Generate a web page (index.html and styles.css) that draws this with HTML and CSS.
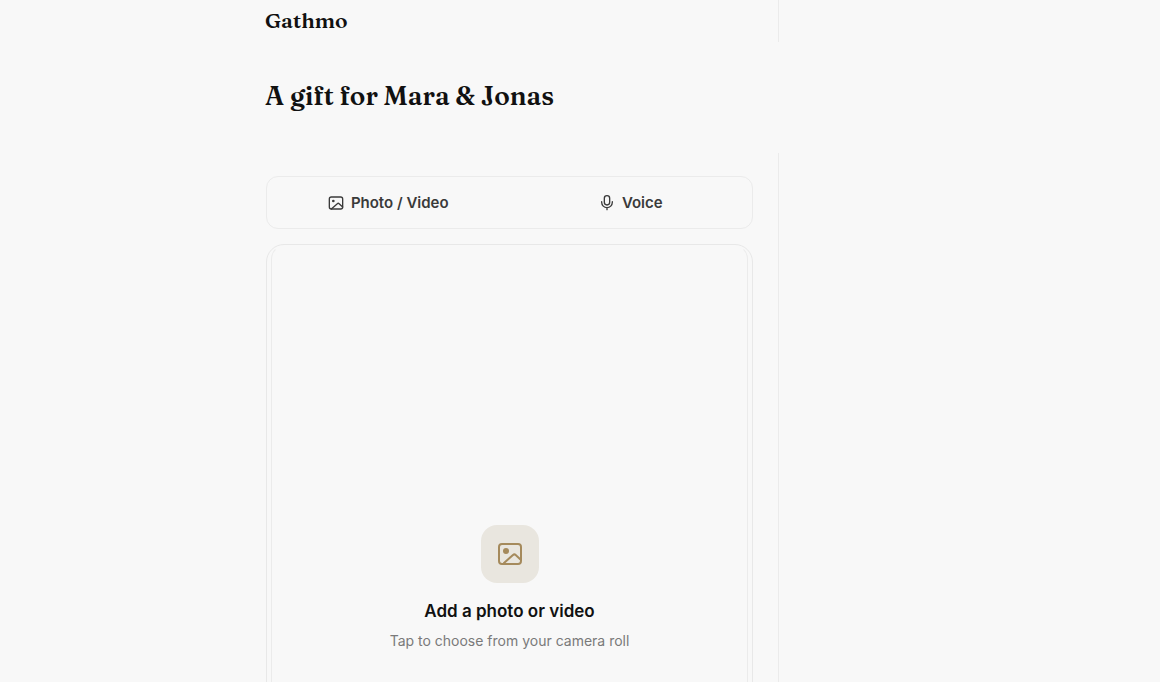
FILE: index.html
```
<!DOCTYPE html>
<html lang="en">
<head>
  <meta charset="UTF-8">
  <meta name="viewport" content="width=device-width, initial-scale=1.0">
  <title>Gathmo</title>
  <link rel="stylesheet" href="styles.css">
</head>
<body>
  <div class="page">
    <header class="topbar">
      <span class="brand">Gathmo</span>
    </header>
    <div class="intro">
      <h1>A gift for Mara &amp; Jonas</h1>
    </div>
    <main class="content">
      <div class="tabs">
        <button type="button" class="tab">
          <svg class="tab-icon" viewBox="0 0 24 24" aria-hidden="true">
            <rect x="2" y="3" width="20" height="18" rx="3"/>
            <circle class="dot" cx="8" cy="9" r="2"/>
            <path d="M5 21l9-8a2 2 0 0 1 2.700 0L22 18"/>
          </svg>
          Photo / Video
        </button>
        <button type="button" class="tab">
          <svg class="tab-icon" viewBox="0 0 24 24" aria-hidden="true">
            <rect x="8" y="1" width="8" height="14" rx="4"/>
            <path d="M4 10v1a8 8 0 0 0 16 0v-1M12 19v3"/>
          </svg>
          Voice
        </button>
      </div>
      <button type="button" class="dropzone">
        <span class="dropzone-inner">
          <span class="tile">
            <svg class="tile-icon" viewBox="0 0 24 24" aria-hidden="true">
              <rect x="1" y="2" width="22" height="20" rx="3"/>
              <circle class="dot" cx="8" cy="9" r="3"/>
              <path d="M6 21l9-8a2 2 0 0 1 2.700 0L23 18"/>
            </svg>
          </span>
          <span class="dropzone-title">Add a photo or video</span>
          <span class="dropzone-hint">Tap to choose from your camera roll</span>
        </span>
      </button>
    </main>
  </div>
</body>
</html>
```
FILE: styles.css
```
* {
  box-sizing: border-box;
}
body {
  margin: 0;
  height: 100vh;
  overflow: hidden;
  background: #f8f8f8;
  color: #111;
  font-family: Inter, "Liberation Sans", sans-serif;
}
.page {
  width: 100%;
  max-width: 779px;
  padding-left: 240px;
}
.topbar {
  height: 42px;
  padding: 6px 26px 0 25px;
  border-right: 1px solid #ebebeb;
}
.brand,
h1 {
  margin: 0;
  font-family: Fraunces, "Liberation Serif", serif;
  font-weight: 600;
}
.brand {
  display: block;
  font-size: 21px;
  line-height: 28px;
}
.intro {
  padding: 36px 26px 39px 25px;
}
h1 {
  font-size: 26px;
  line-height: 36px;
}
.content {
  display: flex;
  flex-direction: column;
  gap: 15px;
  padding: 23px 25px 24px 26px;
  border-right: 1px solid #ebebeb;
}
.tabs {
  display: grid;
  grid-template-columns: 1fr 1fr;
  height: 53px;
  border: 1px solid #ebebeb;
  border-radius: 12px;
}
.tab {
  display: flex;
  align-items: center;
  justify-content: center;
  gap: 7px;
  padding: 0;
  border: 0;
  background: none;
  color: #3a3a3a;
  font: inherit;
  font-size: 15px;
  font-weight: 600;
  cursor: pointer;
}
.tab-icon,
.tile-icon {
  width: 16px;
  height: 16px;
  fill: none;
  stroke: currentColor;
  stroke-width: 2;
  stroke-linecap: round;
  stroke-linejoin: round;
}
.dot {
  fill: currentColor;
  stroke: none;
}
.dropzone {
  display: flex;
  width: 100%;
  aspect-ratio: 5 / 7;
  padding: 0 4px;
  border: 1px solid #e8e8e8;
  border-radius: 18px;
  background: none;
  color: inherit;
  font: inherit;
  cursor: pointer;
}
.dropzone-inner {
  display: flex;
  flex: 1;
  flex-direction: column;
  align-items: center;
  justify-content: center;
  height: 100%;
  padding-top: 6px;
  border: 1px solid #ebebeb;
  border-top-color: transparent;
  border-radius: 14px;
}
.tile {
  display: flex;
  align-items: center;
  justify-content: center;
  width: 58px;
  height: 58px;
  margin-bottom: 16px;
  border-radius: 16px;
  background: #e9e6df;
  color: #a58a5c;
}
.tile-icon {
  width: 24px;
  height: 24px;
}
.dropzone-title {
  margin-bottom: 8px;
  font-size: 17px;
  font-weight: 600;
  line-height: 24px;
}
.dropzone-hint {
  color: #7a7a7a;
  font-size: 14px;
  line-height: 20px;
}
```
